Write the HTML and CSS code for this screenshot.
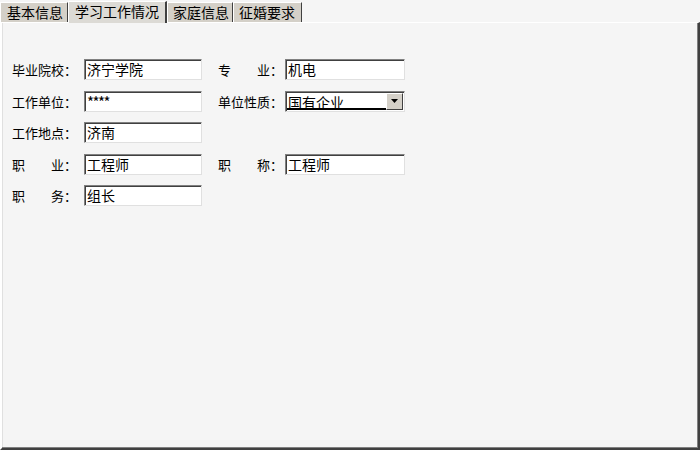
FILE: index.html
```html
<!DOCTYPE html>
<html>
<head>
<meta charset="utf-8">
<link rel="stylesheet" href="styles.css">
</head>
<body>
<div class="window">
  <div class="tabs">
    <div class="tab t1">基本信息</div>
    <div class="tab t2 active">学习工作情况</div>
    <div class="tab t3">家庭信息</div>
    <div class="tab t4">征婚要求</div>
  </div>
  <div class="panel">
    <div class="form">
      <div class="row">
        <span class="lbl">毕业院校：</span><span class="inp">济宁学院</span>
        <span class="lbl lbl2">专&emsp;&emsp;业：</span><span class="inp w2">机电</span>
      </div>
      <div class="row">
        <span class="lbl">工作单位：</span><span class="inp pw">****</span>
        <span class="lbl lbl2">单位性质：</span>
        <span class="sel"><span class="selval"><span class="seltext">国有企业</span></span><span class="selbtn"><svg width="7" height="4" viewBox="0 0 7 4"><path d="M0 0h7L3.5 4z" fill="#000"/></svg></span></span>
      </div>
      <div class="row">
        <span class="lbl">工作地点：</span><span class="inp">济南</span>
      </div>
      <div class="row">
        <span class="lbl">职&emsp;&emsp;业：</span><span class="inp">工程师</span>
        <span class="lbl lbl2">职&emsp;&emsp;称：</span><span class="inp w2">工程师</span>
      </div>
      <div class="row">
        <span class="lbl">职&emsp;&emsp;务：</span><span class="inp">组长</span>
      </div>
    </div>
  </div>
</div>
</body>
</html>
```
FILE: styles.css
```css
html, body {
  margin: 0;
  padding: 0;
  width: 700px;
  height: 450px;
  overflow: hidden;
  background: #f5f5f5;
  font-family: "Noto Sans CJK SC", "Liberation Sans", sans-serif;
  color: #000;
}
.window {
  width: 700px;
  height: 450px;
  display: flex;
  flex-direction: column;
}
.tabs {
  display: flex;
  height: 22px;
  align-items: flex-end;
  background: #f5f5f5;
  position: relative;
  z-index: 1;
}
.tab {
  box-sizing: border-box;
  height: 20px;
  font-size: 14px;
  line-height: 18px;
  background: #d4d0c8;
  border-top: 1px solid #ffffff;
  border-left: 1px solid #ffffff;
  border-right: 1px solid #404040;
  padding-left: 5px;
  white-space: nowrap;
  overflow: hidden;
}
.t1 { width: 68px; padding-left: 6px; }
.t2 { width: 99px; }
.t3 { width: 66px; }
.t4 { width: 69px; }
.tab.active {
  height: 22px;
  line-height: 19px;
  background: #dcdad5;
  border-right: 2px solid #404040;
  margin-bottom: -1px;
  padding-left: 6px;
}
.panel {
  flex: 1;
  box-sizing: border-box;
  background: #f5f5f5;
  border-top: 1px solid #ffffff;
  border-left: 2px solid #ffffff;
  border-right: 2px solid #404040;
  border-bottom: 2px solid #404040;
  box-shadow: inset -1px -1px 0 #808080, inset 1px 0 0 #e0e0e0;
}
.form {
  padding-top: 36px;
  padding-left: 10px;
  display: flex;
  flex-direction: column;
  gap: 10.5px;
}
.row {
  display: flex;
  align-items: center;
  height: 21px;
}
.lbl {
  width: 72px;
  font-size: 13px;
  line-height: 21px;
  white-space: nowrap;
}
.lbl2 {
  margin-left: 16px;
  width: 67px;
}
.inp, .sel {
  box-sizing: border-box;
  height: 21px;
  width: 118px;
  background: #ffffff;
  border-top: 1px solid #808080;
  border-left: 1px solid #808080;
  border-right: 1px solid #e0e0e0;
  border-bottom: 1px solid #e0e0e0;
  box-shadow: inset 1px 1px 0 #404040;
  font-size: 14px;
  line-height: 18px;
  padding-left: 2px;
  white-space: nowrap;
  overflow: hidden;
}
.w2 { width: 120px; }
.pw { font-size: 15px; letter-spacing: -1.5px; line-height: 20px; }
.sel {
  width: 120px;
  display: flex;
  padding: 0 1px 0 1px;
  padding-top: 1px;
}
.selval {
  flex: 1;
  padding-left: 1px;
  border-bottom: 2px solid #000;
  box-sizing: border-box;
  height: 17px;
}
.seltext {
  text-decoration: underline;
  line-height: 15px;
}
.selbtn {
  width: 17px;
  height: 17px;
  box-sizing: border-box;
  background: #d4d0c8;
  border-top: 1px solid #ffffff;
  border-left: 1px solid #ffffff;
  border-right: 1px solid #404040;
  border-bottom: 1px solid #404040;
  display: flex;
  align-items: center;
  justify-content: center;
}
```
